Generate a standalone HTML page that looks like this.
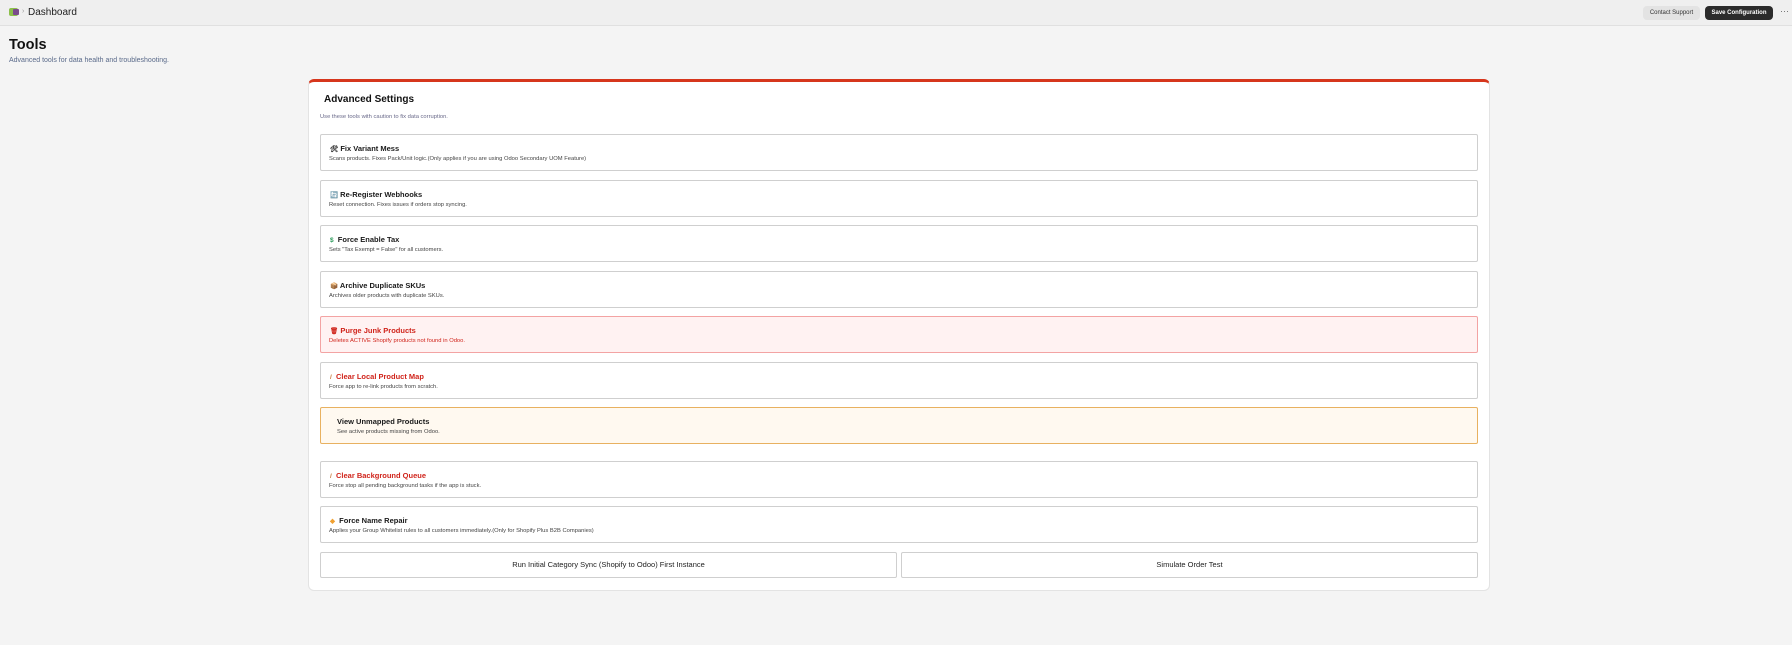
<!DOCTYPE html>
<html><head><meta charset="utf-8"><style>
*{box-sizing:border-box;margin:0;padding:0}
body{width:1792px;height:645px;background:#f4f4f4;font-family:"Liberation Sans",sans-serif;position:relative;overflow:hidden;color:#1a1a1a}
.top{position:absolute;left:0;top:0;width:1792px;height:26px;background:#efefef;border-bottom:1px solid #e0e0e0}
.abs{position:absolute}
.card{position:absolute;left:308px;top:79px;width:1182px;height:512px;background:#fff;border:1px solid #e3e3e3;border-top:3px solid #d6361c;border-radius:6px}
.it{position:absolute;left:320px;width:1158px;height:37px;background:#fff;border:1px solid #cfcfcf;border-radius:2px}
.it b{position:absolute;left:9px;top:9px;font-size:7.5px;font-weight:bold;color:#1a1a1a;white-space:nowrap}
.it span{position:absolute;left:8px;top:21px;font-size:5.8px;color:#444;white-space:nowrap}
.red{background:#fff2f2;border-color:#f3a3a3}
.red b,.red span{color:#d0241b}
.rt b{color:#d0241b}
.org{background:#fff9f0;border-color:#e8b160}
.btn{position:absolute;top:552px;height:26px;background:#fff;border:1px solid #cfcfcf;border-radius:2px;font-size:7.5px;text-align:center;line-height:24px;color:#222}
.ic{font-size:6.5px;font-style:normal}
</style></head><body>
<div class="top"></div>
<div class="abs" style="left:9px;top:8px;width:9px;height:8px;background:#8cbf4a;border-radius:2px"></div>
<div class="abs" style="left:13px;top:9px;width:6px;height:6px;background:#7a4a8c;border-radius:1px"></div>
<div class="abs" style="left:22px;top:8px;font-size:7px;color:#999">›</div>
<div class="abs" style="left:28px;top:7px;font-size:10px;color:#222">Dashboard</div>
<div class="abs" style="left:1643px;top:6px;width:57px;height:14px;background:#e3e3e3;border-radius:4px;font-size:6px;color:#333;text-align:center;line-height:14px">Contact Support</div>
<div class="abs" style="left:1705px;top:6px;width:68px;height:14px;background:#2b2b2b;border-radius:4px;font-size:6px;font-weight:bold;color:#fff;text-align:center;line-height:14px">Save Configuration</div>
<div class="abs" style="left:1780px;top:6px;font-size:9px;color:#666">···</div>
<div class="abs" style="left:9px;top:37px;font-size:14.5px;font-weight:bold;color:#111">Tools</div>
<div class="abs" style="left:9px;top:57px;font-size:7px;color:#5a6a8a">Advanced tools for data health and troubleshooting.</div>
<div class="card"></div>
<div class="abs" style="left:324px;top:94px;font-size:10px;font-weight:bold;color:#111">Advanced Settings</div>
<div class="abs" style="left:320px;top:114px;font-size:5.8px;color:#6a6a8a">Use these tools with caution to fix data corruption.</div>
<div class="it" style="top:134px"><b><i class="ic">🛠</i> Fix Variant Mess</b><span>Scans products. Fixes Pack/Unit logic.(Only applies if you are using Odoo Secondary UOM Feature)</span></div>
<div class="it" style="top:180px"><b><i class="ic">🔄</i> Re-Register Webhooks</b><span>Reset connection. Fixes issues if orders stop syncing.</span></div>
<div class="it" style="top:225px"><b><i class="ic" style="color:#2a9a5a">$</i>&nbsp; Force Enable Tax</b><span>Sets "Tax Exempt = False" for all customers.</span></div>
<div class="it" style="top:271px"><b><i class="ic">📦</i> Archive Duplicate SKUs</b><span>Archives older products with duplicate SKUs.</span></div>
<div class="it red" style="top:316px"><b><i class="ic">🗑</i> Purge Junk Products</b><span>Deletes ACTIVE Shopify products not found in Odoo.</span></div>
<div class="it rt" style="top:362px"><b><i class="ic" style="color:#c8773a">/</i>&nbsp; Clear Local Product Map</b><span>Force app to re-link products from scratch.</span></div>
<div class="it org" style="top:407px"><b style="left:16px">View Unmapped Products</b><span style="left:16px">See active products missing from Odoo.</span></div>
<div class="it rt" style="top:461px"><b><i class="ic" style="color:#c8773a">/</i>&nbsp; Clear Background Queue</b><span>Force stop all pending background tasks if the app is stuck.</span></div>
<div class="it" style="top:506px"><b><i class="ic" style="color:#f0a030">◆</i>&nbsp; Force Name Repair</b><span>Applies your Group Whitelist rules to all customers immediately.(Only for Shopify Plus B2B Companies)</span></div>
<div class="btn" style="left:320px;width:577px">Run Initial Category Sync (Shopify to Odoo) First Instance</div>
<div class="btn" style="left:901px;width:577px">Simulate Order Test</div>
</body></html>
